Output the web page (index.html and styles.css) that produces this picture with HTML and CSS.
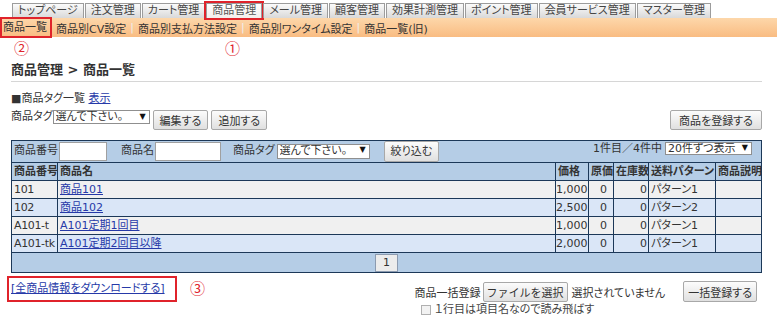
FILE: index.html
```html
<!DOCTYPE html>
<html lang="ja">
<head>
    <meta charset="UTF-8">
    <meta name="viewport" content="width=device-width, initial-scale=1.0">
    <title>商品管理 - 商品一覧</title>
    <link rel="stylesheet" href="styles.css">
</head>
<body>
    <div class="tabs">
        <span class="tab">トップページ</span>
        <span class="tab">注文管理</span>
        <span class="tab">カート管理</span>
        <span class="tab active marked">商品管理</span>
        <span class="tab">メール管理</span>
        <span class="tab">顧客管理</span>
        <span class="tab">効果計測管理</span>
        <span class="tab">ポイント管理</span>
        <span class="tab">会員サービス管理</span>
        <span class="tab">マスター管理</span>
    </div>

    <div class="subnav">
        <a class="current marked" href="#">商品一覧</a>
        <a href="#">商品別CV設定</a><span class="sep">|</span>
        <a href="#">商品別支払方法設定</a><span class="sep">|</span>
        <a href="#">商品別ワンタイム設定</a><span class="sep">|</span>
        <a href="#">商品一覧(旧)</a>
    </div>

    <span class="note note-1">①</span>
    <span class="note note-2">②</span>
    <span class="note note-3">③</span>

    <div class="main">
        <h2 class="page-title">商品管理 &gt; 商品一覧</h2>

        <div class="tag-head">■商品タグ一覧 <a href="#">表示</a></div>
        <div class="tag-row">
            <span class="label">商品タグ</span>
            <span class="select select-tag"><select><option>選んで下さい。</option></select></span>
            <button class="btn btn-edit">編集する</button>
            <button class="btn btn-add">追加する</button>
            <button class="btn btn-register">商品を登録する</button>
        </div>

        <table class="list">
            <colgroup>
                <col class="c-code">
                <col class="c-name">
                <col class="c-price">
                <col class="c-cost">
                <col class="c-stock">
                <col class="c-ship">
                <col class="c-desc">
            </colgroup>
            <tr class="filter">
                <td colspan="7">
                    <div class="filter-bar">
                        <span class="label">商品番号</span>
                        <input type="text" class="input input-code">
                        <span class="label label-name">商品名</span>
                        <input type="text" class="input input-name">
                        <span class="label label-tag">商品タグ</span>
                        <span class="select select-ftag"><select><option>選んで下さい。</option></select></span>
                        <button class="btn btn-filter">絞り込む</button>
                        <span class="count">1件目／4件中</span>
                        <span class="select select-per"><select><option>20件ずつ表示</option></select></span>
                    </div>
                </td>
            </tr>
            <tr class="head">
                <th>商品番号</th>
                <th>商品名</th>
                <th>価格</th>
                <th>原価</th>
                <th>在庫数</th>
                <th>送料パターン</th>
                <th>商品説明</th>
            </tr>
            <tr class="odd">
                <td class="code">101</td>
                <td><a href="#">商品101</a></td>
                <td class="num">1,000</td>
                <td class="num cost">0</td>
                <td class="num">0</td>
                <td>パターン1</td>
                <td></td>
            </tr>
            <tr class="even">
                <td class="code">102</td>
                <td><a href="#">商品102</a></td>
                <td class="num">2,500</td>
                <td class="num cost">0</td>
                <td class="num">0</td>
                <td>パターン2</td>
                <td></td>
            </tr>
            <tr class="odd">
                <td class="code">A101-t</td>
                <td><a href="#">A101定期1回目</a></td>
                <td class="num">1,000</td>
                <td class="num cost">0</td>
                <td class="num">0</td>
                <td>パターン1</td>
                <td></td>
            </tr>
            <tr class="even">
                <td class="code">A101-tk</td>
                <td><a href="#">A101定期2回目以降</a></td>
                <td class="num">2,000</td>
                <td class="num cost">0</td>
                <td class="num">0</td>
                <td>パターン1</td>
                <td></td>
            </tr>
            <tr class="pager">
                <td colspan="7"><span class="page">1</span></td>
            </tr>
        </table>

        <div class="bottom">
            <a class="download marked" href="#">[全商品情報をダウンロードする]</a>
            <div class="bulk">
                <div class="bulk-row">
                    <span class="label">商品一括登録</span>
                    <button class="file-btn">ファイルを選択</button>
                    <span class="file-name">選択されていません</span>
                    <button class="btn btn-bulk">一括登録する</button>
                </div>
                <label class="skip"><input type="checkbox"> １行目は項目名なので読み飛ばす</label>
            </div>
        </div>
    </div>
</body>
</html>
```

FILE: styles.css
```css
* {
    margin: 0;
    padding: 0;
    box-sizing: border-box;
}

body {
    font-family: "DejaVu Sans", "Noto Sans CJK JP", sans-serif;
    font-size: 11px;
    color: #333;
    background: #fff;
    font-feature-settings: "palt";
    position: relative;
}

a {
    color: #2639a8;
}

/* annotation boxes and numbers */
.marked {
    outline: 2px solid #e0232b;
}

.note {
    position: absolute;
    color: #e0232b;
    font-size: 15px;
    line-height: 15px;
    font-family: "Noto Sans CJK JP", sans-serif;
}

.note-1 { left: 225px; top: 40px; }
.note-2 { left: 14px; top: 40px; }
.note-3 { left: 190px; top: 280px; }

/* top tabs */
.tabs {
    display: flex;
    gap: 1px;
    height: 18px;
    padding: 3px 0 0 12px;
}

.tab {
    height: 15px;
    line-height: 14px;
    padding: 0 5px;
    border: 1px solid #9c9c9c;
    border-bottom: 0;
    background: linear-gradient(#fbfbfb, #d9d9d9);
    color: #444;
    white-space: nowrap;
}

.tab.active {
    background: linear-gradient(#fff, #f3eeec);
    color: #555;
}

/* orange sub menu */
.subnav {
    height: 19px;
    display: flex;
    align-items: center;
    padding-left: 2px;
    background: linear-gradient(#fdd7aa, #f9bc82);
    white-space: nowrap;
}

.subnav a {
    color: #333;
    text-decoration: none;
}

.subnav .current {
    height: 17px;
    line-height: 17px;
    padding: 0 3px 0 1px;
    margin-right: 6px;
}

.subnav .sep {
    color: #eee;
    margin: 0 4px;
}

/* main */
.main {
    padding: 0 15px 0 11px;
}

.page-title {
    margin-top: 24px;
    font-size: 13px;
    line-height: 18px;
    font-weight: bold;
    padding-bottom: 2px;
    border-bottom: 1px solid #d6d6d6;
}

.tag-head {
    margin-top: 9px;
    line-height: 16px;
}

.tag-row {
    display: flex;
    align-items: flex-start;
    margin-top: 3px;
}

.tag-row .label {
    line-height: 14px;
}

.select {
    position: relative;
    display: inline-block;
}

.select select {
    appearance: none;
    -webkit-appearance: none;
    font: inherit;
    color: #333;
    background: #fff;
    border: 1px solid #8f8f8f;
    border-radius: 0;
    height: 14px;
    line-height: 12px;
    padding: 0 14px 0 2px;
}

.select::after {
    content: "▼";
    position: absolute;
    right: 4px;
    top: 1px;
    font-size: 8px;
    line-height: 12px;
    color: #111;
    pointer-events: none;
}

.select-tag select { width: 97px; }
.select-ftag select { width: 93px; height: 15px; }
.select-per select { width: 87px; height: 13px; line-height: 11px; }
.select-per::after { line-height: 11px; }

.btn {
    font: inherit;
    color: #333;
    height: 20px;
    padding: 0 6px;
    border: 1px solid #a8a8a8;
    border-radius: 2px;
    background: linear-gradient(#fcfcfc, #e0e0e0);
    white-space: nowrap;
}

.btn-edit { margin-left: 3px; }
.btn-add { margin-left: 3px; }
.btn-register { margin-left: auto; padding: 0 8px; }

/* list table */
.list {
    width: 100%;
    margin-top: 10px;
    border-collapse: collapse;
    table-layout: fixed;
    border: 1px solid #1c3858;
}

.c-code { width: 46px; }
.c-price { width: 33px; }
.c-cost { width: 25px; }
.c-stock { width: 35px; }
.c-ship { width: 67px; }
.c-desc { width: 46px; }

.list th,
.list td {
    border: 1px solid #1c3858;
    height: 18px;
    padding: 0 1px 0 2px;
    line-height: 16px;
    text-align: left;
    white-space: nowrap;
    overflow: hidden;
}

.list th {
    background: #b5cde6;
    font-weight: bold;
}

.list .odd td {
    background: #f0f0f0;
}

.list .even td {
    background: #dae6f7;
}

.list .code {
    letter-spacing: -0.35px;
}

.list .num {
    text-align: right;
    padding-left: 0;
}

.list .cost {
    padding-right: 6px;
}

.list .filter td {
    background: #b5cde6;
    height: 22px;
    padding: 0 2px;
}

.filter-bar {
    display: flex;
    align-items: flex-start;
}

.filter-bar .label {
    line-height: 20px;
}

.filter-bar .label-name { margin-left: 14px; }
.filter-bar .label-tag { margin-left: 12px; }

.input {
    height: 19px;
    margin-left: 1px;
    border: 1px solid #a0a0a0;
    background: #fff;
    margin-top: 1px;
}

.input-code { width: 48px; }
.input-name { width: 66px; }

.select-ftag {
    margin-left: 2px;
    margin-top: 2px;
}

.btn-filter {
    margin-left: 14px;
    height: 21px;
}

.count {
    margin-left: auto;
    line-height: 14px;
    margin-right: 3px;
    margin-top: 1px;
}

.select-per {
    margin-right: 7px;
}

.list .pager td {
    background: #b5cde6;
    height: 20px;
    padding: 0;
    text-align: center;
    line-height: 0;
}

.page {
    display: inline-block;
    width: 23px;
    height: 18px;
    line-height: 16px;
    border: 1px solid #8c9bb0;
    background: #ececec;
}

/* bottom */
.bottom {
    display: flex;
    justify-content: space-between;
    align-items: flex-start;
}

.download {
    margin-top: 5px;
    margin-left: -2px;
    height: 22px;
    line-height: 22px;
    padding: 0 10px 0 2px;
}

.bulk {
    margin-top: 8px;
    padding-right: 5px;
}

.bulk-row {
    display: flex;
    align-items: center;
    height: 21px;
}

.file-btn {
    font: inherit;
    font-feature-settings: normal;
    color: #333;
    height: 20px;
    width: 85px;
    margin-left: 2px;
    border: 1px solid #a8a8a8;
    border-radius: 2px;
    background: linear-gradient(#fcfcfc, #e0e0e0);
}

.file-name {
    margin-left: 4px;
}

.btn-bulk {
    margin-left: 18px;
    height: 21px;
    padding: 0 4px;
}

.skip {
    display: flex;
    align-items: center;
    gap: 4px;
    margin-top: 2px;
    padding-left: 6px;
    color: #444;
    line-height: 12px;
}

.skip input {
    appearance: none;
    -webkit-appearance: none;
    width: 10px;
    height: 10px;
    border: 1px solid #b0b0b0;
    background: #f2f2f2;
}
```
